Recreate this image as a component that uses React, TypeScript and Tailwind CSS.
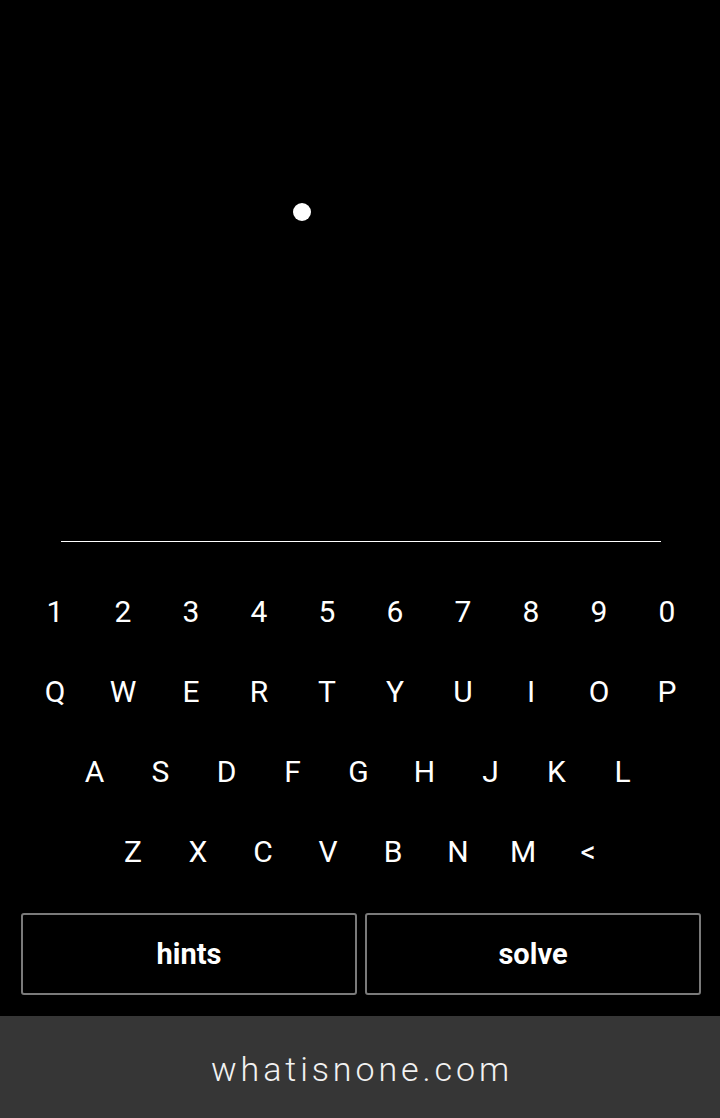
import React from 'react';

const rows: { keys: string[]; w: string; pad: string }[] = [
  { keys: ['1', '2', '3', '4', '5', '6', '7', '8', '9', '0'], w: 'w-[68px]', pad: 'pl-[2px]' },
  { keys: ['Q', 'W', 'E', 'R', 'T', 'Y', 'U', 'I', 'O', 'P'], w: 'w-[68px]', pad: 'pl-[2px]' },
  { keys: ['A', 'S', 'D', 'F', 'G', 'H', 'J', 'K', 'L'], w: 'w-[66px]', pad: 'pr-[3px]' },
  { keys: ['Z', 'X', 'C', 'V', 'B', 'N', 'M', '<'], w: 'w-[65px]', pad: 'pl-[1px]' },
];

const App: React.FC = () => {
  return (
    <div className="min-h-screen bg-black text-white flex flex-col" style={{ fontFamily: 'Roboto, "Noto Sans", sans-serif' }}>
      {/* puzzle area */}
      <div className="h-[541px] pt-[203px] pl-[293px]">
        <div className="w-[18px] h-[18px] rounded-full bg-white" />
      </div>
      <div className="mx-auto w-[600px] h-px bg-white translate-x-[1px]" />

      {/* keyboard */}
      <div className="pt-[30px] flex flex-col">
        {rows.map((row, i) => (
          <div key={i} className={`h-[80px] flex justify-center items-center ${row.pad}`}>
            {row.keys.map((k) => (
              <button key={k} className={`${row.w} h-full flex items-center justify-center text-[30px] leading-none`}>
                {k}
              </button>
            ))}
          </div>
        ))}
      </div>

      <div className="mt-[21px] flex gap-2 pl-[21px] pr-[19px]">
        <button className="flex-1 h-[82px] border-2 border-[#7a7a7a] rounded-[3px] text-[29px] font-bold pt-[2px]">hints</button>
        <button className="flex-1 h-[82px] border-2 border-[#7a7a7a] rounded-[3px] text-[29px] font-bold pt-[2px]">solve</button>
      </div>

      <div className="mt-[21px] h-[102px] bg-[#363636] flex items-center justify-center pt-[4px]">
        <span className="text-[34px] font-light tracking-[3.9px] text-[#f2f2f2] pl-[4px]">whatisnone.com</span>
      </div>
    </div>
  );
};

export default App;
